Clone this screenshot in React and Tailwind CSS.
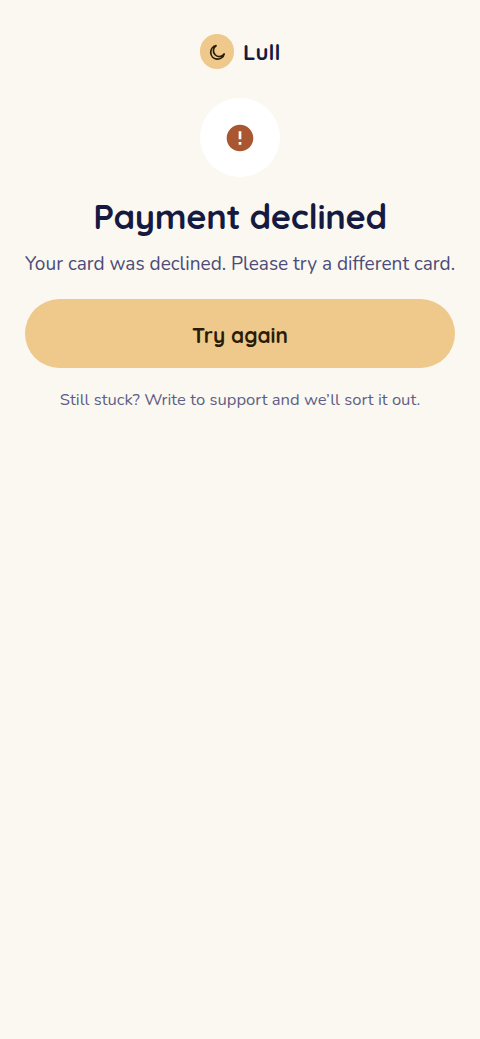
import React from "react";
import { MdError } from "react-icons/md";

function MoonIcon({ className }) {
  return (
    <svg
      viewBox="0 0 24 24"
      fill="none"
      stroke="currentColor"
      strokeWidth="2.1"
      strokeLinecap="round"
      strokeLinejoin="round"
      className={className}
    >
      <path d="M11 4.5A8.3 8.3 0 1 0 20.9 14.6A7.2 7.2 0 1 1 11 4.5Z" />
    </svg>
  );
}

function Logo() {
  return (
    <div className="flex h-[35px] items-center gap-[9px]">
      <div className="flex size-[34.5px] items-center justify-center rounded-full bg-[#efc88b]">
        <MoonIcon className="size-[19.7px] text-[#2a1d08]" />
      </div>
      <span className="pt-[2px] font-['Quicksand',sans-serif] text-[22.15px] leading-[33px] font-bold text-[#151a42]">
        Lull
      </span>
    </div>
  );
}

function App() {
  return (
    <div className="flex min-h-screen flex-col items-center bg-[#fbf8f1] px-[24.6px] pt-[34px] font-['Nunito',sans-serif]">
      <Logo />

      <div className="mt-[28.7px] flex size-[79.8px] items-center justify-center rounded-full bg-white">
        <MdError className="size-8 text-[#a85730]" />
      </div>

      <h1 className="mt-[16.5px] font-['Quicksand',sans-serif] text-[34.5px] leading-[44px] font-bold tracking-[-0.01em] whitespace-nowrap text-[#151a42]">
        Payment declined
      </h1>
      <p className="mt-[12px] text-[19.07px] leading-7 whitespace-nowrap text-[#4b4c78]">
        Your card was declined. Please try a different card.
      </p>

      <button className="mt-[21px] h-[69px] w-full rounded-full bg-[#efc88b] pt-[4px] font-['Quicksand',sans-serif] text-[20.92px] font-bold text-[#2a1d08]">
        Try again
      </button>

      <p className="mt-[20px] text-[16.6px] leading-6 whitespace-nowrap text-[#5f5f86]">
        Still stuck? Write to support and we’ll sort it out.
      </p>
    </div>
  );
}

export default App;
